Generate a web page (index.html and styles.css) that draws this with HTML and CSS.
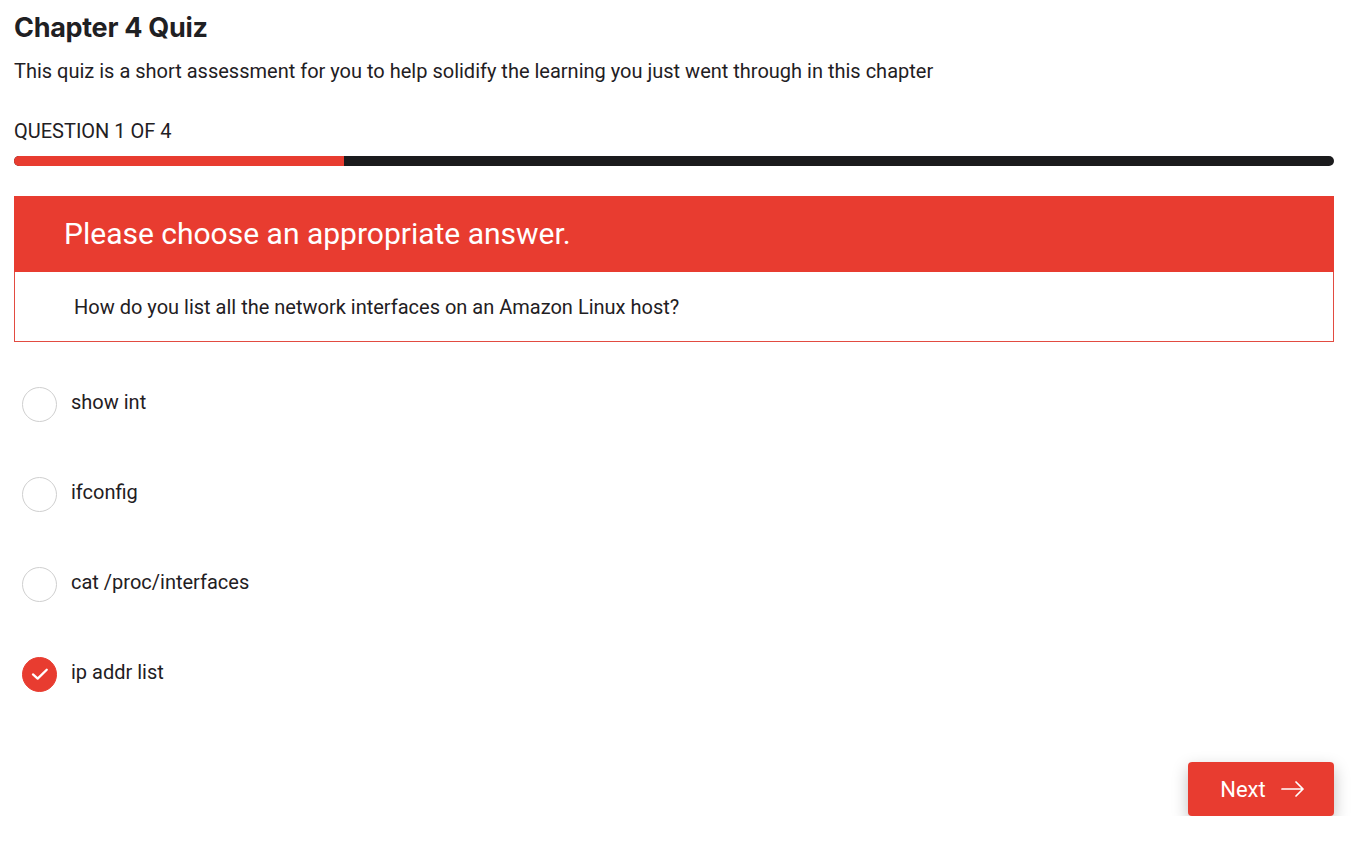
FILE: index.html
```html
<!DOCTYPE html>
<html>
<head>
<meta charset="utf-8">
<link rel="stylesheet" href="styles.css">
</head>
<body>
<main class="quiz">
  <h1 class="title">Chapter 4 Quiz</h1>
  <p class="desc">This quiz is a short assessment for you to help solidify the learning you just went through in this chapter</p>
  <div class="counter">QUESTION 1 OF 4</div>
  <div class="progress"><div class="progress-fill" style="width:25%"></div></div>
  <section class="card">
    <div class="card-head">Please choose an appropriate answer.</div>
    <div class="card-body">How do you list all the network interfaces on an Amazon Linux host?</div>
  </section>
  <ul class="options">
    <li class="option"><span class="radio"></span><span class="label">show int</span></li>
    <li class="option"><span class="radio"></span><span class="label">ifconfig</span></li>
    <li class="option"><span class="radio"></span><span class="label">cat /proc/interfaces</span></li>
    <li class="option"><span class="radio checked"><svg width="22" height="22" viewBox="0 0 16 16"><path d="M2.9 8.3 L6.3 11.3 L12.9 4.9" fill="none" stroke="#fff" stroke-width="1.7" stroke-linecap="round" stroke-linejoin="round"/></svg></span><span class="label">ip addr list</span></li>
  </ul>
  <div class="actions">
    <button class="next">Next <svg width="26" height="18" viewBox="0 0 26 18"><path d="M2 9 H23 M16 2 L23 9 L16 16" fill="none" stroke="#fff" stroke-width="1.7" stroke-linecap="round" stroke-linejoin="round"/></svg></button>
  </div>
</main>
</body>
</html>
```
FILE: styles.css
```css
* { box-sizing: border-box; }
html, body { margin: 0; padding: 0; background: #fff; }
body { font-family: Roboto, "Liberation Sans", sans-serif; color: #1f2023; }
.quiz { padding: 12px 31px 0 14px; }
.title {
  font-family: Inter, Roboto, sans-serif;
  font-weight: 700;
  font-size: 27px;
  line-height: 32px;
  margin: 0;
  color: #1f2023;
  letter-spacing: -0.3px;
}
.desc { margin: 15px 0 0; font-size: 20px; line-height: 24px; }
.counter { margin-top: 36px; font-size: 20px; line-height: 24px; }
.progress {
  margin-top: 13px;
  height: 10px;
  border-radius: 5px;
  background: #1b1b1d;
  overflow: hidden;
}
.progress-fill { height: 100%; background: #e83c30; }
.card { margin-top: 30px; }
.card-head {
  background: #e83c30;
  color: #fff;
  font-size: 30px;
  line-height: 76px;
  height: 76px;
  padding-left: 50px;
}
.card-body {
  border: 1px solid #e24b41;
  border-top: none;
  height: 70px;
  padding-left: 59px;
  display: flex;
  align-items: center;
  font-size: 20px;
}
.options { list-style: none; margin: 17px 0 0; padding: 0 0 0 8px; }
.option { display: flex; align-items: center; height: 90px; }
.radio {
  width: 35px; height: 35px;
  border-radius: 50%;
  border: 1px solid #cfcfcf;
  display: flex; align-items: center; justify-content: center;
  flex: none;
}
.radio.checked { background: #e83c30; border-color: #e83c30; }
.label { margin-left: 14px; font-size: 20px; margin-top: -4px; }
.actions { display: flex; justify-content: flex-end; margin-top: 43px; }
.next {
  width: 146px; height: 54px;
  background: #e83c30;
  color: #fff;
  border: none;
  border-radius: 4px;
  font-family: Roboto, sans-serif;
  font-size: 22px;
  display: flex; align-items: center; justify-content: center; gap: 14px;
  box-shadow: 0 6px 16px rgba(0,0,0,0.25);
  padding: 0 0 0 4px;
}
```
